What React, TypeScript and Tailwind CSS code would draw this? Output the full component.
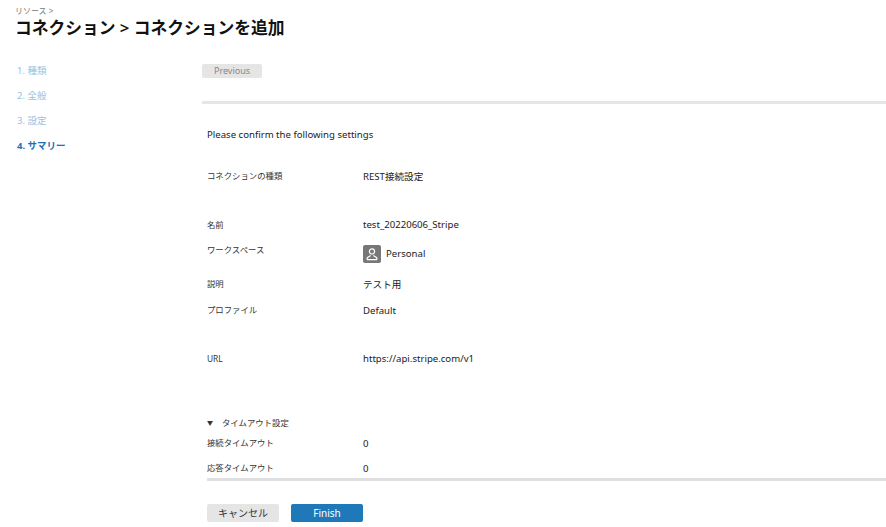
const steps = [
  { label: "1. 種類", active: false },
  { label: "2. 全般", active: false },
  { label: "3. 設定", active: false },
  { label: "4. サマリー", active: true },
];

const Row = ({
  label,
  value,
  className,
  low,
}: {
  label: string;
  value: string;
  className: string;
  low?: boolean;
}) => {
  return (
    <div className={`flex h-[14px] items-center ${className}`}>
      <div className="w-[156px] text-[8.4px] text-[#333]">{label}</div>
      <div className={low ? "mt-[2px] text-[9.6px] text-[#222]" : "text-[9.6px] text-[#222]"}>{value}</div>
    </div>
  );
};

const App = () => {
  return (
    <div
      className="h-[527px] w-[886px] overflow-hidden bg-white"
      style={{ fontFamily: '"Noto Sans", "Noto Sans CJK JP", sans-serif' }}
    >
      <header className="pl-[15px] pt-[5px]">
        <div className="h-[11px] text-[8px] leading-[11px] text-[#777]">リソース &gt;</div>
        <h1 className="h-[24px] text-[16.75px] font-semibold leading-[24px] text-[#111]">
          コネクション &gt; コネクションを追加
        </h1>
      </header>

      <div className="mt-[16px] flex">
        <nav className="w-[202px] shrink-0 pl-[17px] pt-[8px]">
          <ul className="space-y-[11px]">
            {steps.map((step) => (
              <li
                key={step.label}
                className={
                  step.active
                    ? "h-[14px] text-[9.5px] font-bold leading-[14px] text-[#1f6fb2]"
                    : "h-[14px] text-[9.5px] leading-[14px] text-[#9cc0dd]"
                }
              >
                {step.label}
              </li>
            ))}
          </ul>
        </nav>

        <main className="min-w-0 flex-1">
          <button className="h-[14px] w-[60px] rounded-[2px] bg-[#e5e5e5] text-[9px] leading-[14px] text-[#888]">
            Previous
          </button>
          <div className="mt-[21px] h-[3px] bg-[#e6e6e6]" />

          <div className="pl-[5px]">
            <p className="mt-[24px] h-[14px] text-[9.6px] leading-[14px] text-[#222]">
              Please confirm the following settings
            </p>

            <Row className="mt-[27px]" label="コネクションの種類" value="REST接続設定" low />
            <Row className="mt-[35px]" label="名前" value="test_20220606_Stripe" />

            <div className="mt-[12px] flex h-[20px]">
              <div className="w-[156px] text-[8.4px] leading-[12px] text-[#333]">ワークスペース</div>
              <div className="flex items-center gap-[5px] text-[9.6px] text-[#222]">
                <span className="flex h-[18px] w-[18px] items-center justify-center rounded-[2px] bg-[#777]">
                  <svg width="14" height="14" viewBox="0 0 14 14" fill="none" stroke="#ffffff" strokeWidth="1.2">
                    <circle cx="7" cy="4.4" r="2.6" />
                    <path d="M2 12.6v-.8c0-1 .6-1.5 1.5-1.9L5.6 8.6M12 12.6v-.8c0-1-.6-1.5-1.5-1.9L8.4 8.6M2 12.6h10" />
                  </svg>
                </span>
                Personal
              </div>
            </div>

            <Row className="mt-[13px]" label="説明" value="テスト用" low />
            <Row className="mt-[12px]" label="プロファイル" value="Default" low />
            <Row className="mt-[35px]" label="URL" value="https://api.stripe.com/v1" />

            <div className="mt-[50px] flex h-[14px] items-center text-[8.4px] text-[#333]">
              <span className="w-[15px] text-[6px]">▼</span>
              タイムアウト設定
            </div>
            <Row className="mt-[6px]" label="接続タイムアウト" value="0" low />
            <Row className="mt-[11px]" label="応答タイムアウト" value="0" low />
            <div className="mt-[3px] h-[3px] bg-[#e0e0e0]" />

            <div className="mt-[23px] flex gap-[12px]">
              <button className="h-[18px] w-[72px] rounded-[2px] bg-[#e5e5e5] text-[10px] text-[#333]">
                キャンセル
              </button>
              <button className="h-[18px] w-[72px] rounded-[2px] bg-[#1f78b8] text-[10px] text-white">
                Finish
              </button>
            </div>
          </div>
        </main>
      </div>
    </div>
  );
};

export default App;
